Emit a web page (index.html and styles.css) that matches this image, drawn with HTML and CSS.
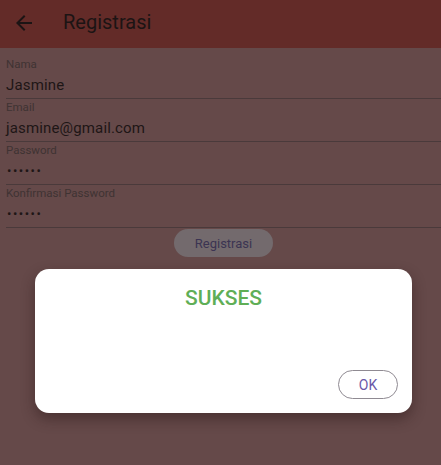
FILE: index.html
```html
<!DOCTYPE html>
<html>
<head>
<meta charset="utf-8">
<link rel="stylesheet" href="styles.css">
</head>
<body>
<div class="app">
  <header class="appbar">
    <svg class="back" viewBox="0 0 24 24" width="24" height="24"><path d="M20 11H7.83l5.59-5.59L12 4l-8 8 8 8 1.41-1.41L7.83 13H20v-2z" fill="#1c1414"/></svg>
    <h1 class="title">Registrasi</h1>
  </header>
  <main class="form">
    <div class="field"><div class="label">Nama</div><div class="value">Jasmine</div></div>
    <div class="field"><div class="label">Email</div><div class="value">jasmine@gmail.com</div></div>
    <div class="field"><div class="label">Password</div><div class="value dots">••••••</div></div>
    <div class="field"><div class="label">Konfirmasi Password</div><div class="value dots">••••••</div></div>
    <div class="actions"><button class="submit">Registrasi</button></div>
  </main>
  <div class="dialog">
    <div class="dialog-title">SUKSES</div>
    <div class="dialog-actions"><button class="ok">OK</button></div>
  </div>
</div>
</body>
</html>
```
FILE: styles.css
```css
* { box-sizing: border-box; }
html, body { margin: 0; padding: 0; }
body {
  width: 441px;
  height: 465px;
  background: #654949;
  font-family: Roboto, "Noto Sans", sans-serif;
  overflow: hidden;
}
.app { position: relative; width: 441px; height: 465px; }
.appbar {
  height: 48px;
  background: #632b28;
  display: flex;
  align-items: center;
  padding-left: 12px;
}
.back { display: block; margin-top: -2px; }
.title {
  margin: -4px 0 0 27px;
  font-size: 20px;
  font-weight: 400;
  color: #1c1414;
  line-height: 24px;
}
.form { padding: 8px 0 0 6px; }
.field {
  border-bottom: 1px solid #4a3a3b;
  padding-bottom: 1px;
}
.label {
  margin-top: 0;
  font-size: 11.5px;
  line-height: 17px;
  color: #3f3333;
  letter-spacing: 0;
}
.value {
  font-size: 15px;
  line-height: 24px;
  color: #1e1616;
  letter-spacing: 0.15px;
}
.dots { font-size: 13px; letter-spacing: 1.5px; padding-left: 1px; }
.actions { display: flex; justify-content: center; padding-top: 1px; padding-right: 6px; }
.submit {
  width: 99px;
  height: 28px;
  border: none;
  border-radius: 14px;
  background: #736a6d;
  color: #3b3452;
  font-family: Roboto, sans-serif;
  font-size: 13px;
  padding: 0;
  margin-left: 6px;
}
.dialog {
  position: absolute;
  left: 35px;
  top: 269px;
  width: 377px;
  height: 144px;
  background: #ffffff;
  border-radius: 14px;
  box-shadow: 0 6px 14px rgba(40, 20, 20, 0.45);
  display: flex;
  flex-direction: column;
  padding: 16px 14px 14px;
}
.dialog-title {
  text-align: center;
  font-size: 21px;
  font-weight: 500;
  color: #5fae56;
  line-height: 26px;
}
.dialog-actions {
  margin-top: auto;
  display: flex;
  justify-content: flex-end;
}
.ok {
  width: 60px;
  height: 29px;
  border: 1.3px solid #8f8a92;
  border-radius: 15px;
  background: #fff;
  color: #6a58a8;
  font-family: Roboto, sans-serif;
  font-size: 14px;
  padding: 0;
}
```
